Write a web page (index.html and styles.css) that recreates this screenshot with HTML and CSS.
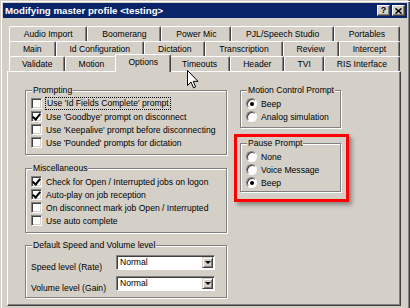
FILE: index.html
```html
<!DOCTYPE html>
<html lang="en">
<head>
    <meta charset="UTF-8">
    <title>Modifying master profile</title>
    <link rel="stylesheet" href="styles.css">
</head>
<body>
    <div class="window">
        <div class="titlebar">
            <span class="title">Modifying master profile &lt;testing&gt;</span>
            <span class="caption-btns">
                <span class="cbtn">?</span>
                <span class="cbtn">
                    <svg width="7" height="6" viewBox="0 0 7 6"><path d="M0.5 0.5 L6.5 5.5 M6.5 0.5 L0.5 5.5" stroke="#000" stroke-width="1.6"/></svg>
                </span>
            </span>
        </div>

        <!-- tab rows, back to front -->
        <div class="tabs">
            <div class="tab-row">
                <span class="tab">Audio Import</span>
                <span class="tab">Boomerang</span>
                <span class="tab">Power Mic</span>
                <span class="tab">PJL/Speech Studio</span>
                <span class="tab">Portables</span>
            </div>
            <div class="tab-row">
                <span class="tab">Main</span>
                <span class="tab">Id Configuration</span>
                <span class="tab">Dictation</span>
                <span class="tab">Transcription</span>
                <span class="tab">Review</span>
                <span class="tab">Intercept</span>
            </div>
            <div class="tab-row">
                <span class="tab">Validate</span>
                <span class="tab">Motion</span>
                <span class="tab active">Options</span>
                <span class="tab">Timeouts</span>
                <span class="tab">Header</span>
                <span class="tab">TVI</span>
                <span class="tab">RIS Interface</span>
            </div>
        </div>

        <div class="panel">
            <div class="col-left">
                <fieldset class="group">
                    <legend>Prompting</legend>
                    <div class="opt"><span class="box"></span><span class="focus">Use 'Id Fields Complete' prompt</span></div>
                    <div class="opt"><span class="box checked"></span>Use 'Goodbye' prompt on disconnect</div>
                    <div class="opt"><span class="box"></span>Use 'Keepalive' prompt before disconnecting</div>
                    <div class="opt"><span class="box"></span>Use 'Pounded' prompts for dictation</div>
                </fieldset>

                <fieldset class="group misc">
                    <legend>Miscellaneous</legend>
                    <div class="opt"><span class="box checked"></span>Check for Open / Interrupted jobs on logon</div>
                    <div class="opt"><span class="box checked"></span>Auto-play on job reception</div>
                    <div class="opt"><span class="box"></span>On disconnect mark job Open / Interrupted</div>
                    <div class="opt"><span class="box"></span>Use auto complete</div>
                </fieldset>

                <fieldset class="group speed">
                    <legend>Default Speed and Volume level</legend>
                    <div class="field">
                        <span class="field-label">Speed level (Rate)</span>
                        <div class="combo"><span class="combo-text">Normal</span><span class="combo-btn"></span></div>
                    </div>
                    <div class="field">
                        <span class="field-label">Volume level (Gain)</span>
                        <div class="combo"><span class="combo-text">Normal</span><span class="combo-btn"></span></div>
                    </div>
                </fieldset>
            </div>

            <div class="col-right">
                <fieldset class="group motion">
                    <legend>Motion Control Prompt</legend>
                    <div class="opt"><span class="radio on"></span>Beep</div>
                    <div class="opt"><span class="radio"></span>Analog simulation</div>
                </fieldset>

                <div class="highlight">
                    <fieldset class="group pause">
                        <legend>Pause Prompt</legend>
                        <div class="opt"><span class="radio"></span>None</div>
                        <div class="opt"><span class="radio"></span>Voice Message</div>
                        <div class="opt"><span class="radio on"></span>Beep</div>
                    </fieldset>
                </div>
            </div>
        </div>

        <svg class="cursor" width="12" height="19" viewBox="0 0 12 19">
            <path d="M0.5 0.5 V15.5 L4 12 L6.5 17.8 L8.6 16.9 L6.2 11.3 H11 Z" fill="#fff" stroke="#000" stroke-width="1" stroke-linejoin="miter"/>
        </svg>
    </div>
</body>
</html>
```

FILE: styles.css
```css
* {
    box-sizing: border-box;
}
body {
    margin: 0;
    background: #d4d0c8;
    color: #000;
    font-family: "Liberation Sans", Arial, sans-serif;
    font-size: 8.6px;
}
.window {
    position: relative;
    width: 410px;
    height: 308px;
    overflow: hidden;
    padding: 3px 3px 0 3px;
    background:
        linear-gradient(#fff, #fff) 1px 1px / 1px 100% no-repeat,
        linear-gradient(#fff, #fff) 1px 1px / 100% 1px no-repeat,
        linear-gradient(#808080, #808080) 408px 0 / 1px 100% no-repeat,
        linear-gradient(#404040, #404040) 409px 0 / 1px 100% no-repeat,
        #d4d0c8;
    background-origin: border-box;
}

/* title bar */
.titlebar {
    height: 15px;
    background: #0a246a;
    color: #fff;
    display: flex;
    align-items: center;
    justify-content: space-between;
    padding: 0 2px 0 2px;
}
.title {
    font-weight: bold;
    font-size: 9.7px;
}
.caption-btns {
    display: flex;
    gap: 2px;
}
.cbtn {
    width: 13px;
    height: 11px;
    background: #d4d0c8;
    color: #000;
    border: 1px solid;
    border-color: #fff #404040 #404040 #fff;
    box-shadow: inset -1px -1px 0 #808080;
    display: flex;
    align-items: center;
    justify-content: center;
    font-weight: bold;
    font-size: 9px;
    line-height: 9px;
}

/* tabs */
.tabs {
    margin: 8px 0 0 6px;
    width: 391px;
}
.tab-row {
    display: flex;
    height: 15px;
}
.tab {
    flex: 1 1 auto;
    text-align: center;
    white-space: nowrap;
    line-height: 14px;
    border-top: 1px solid #fff;
    border-left: 1px solid #fff;
    border-right: 1px solid #404040;
    box-shadow: inset -1px 0 0 #808080;
    border-radius: 2px 2px 0 0;
    background: #d4d0c8;
}
.tab.active {
    position: relative;
    z-index: 1;
    margin: -2px -2px -1px -2px;
    line-height: 15px;
    padding-bottom: 2px;
}

/* tab page */
.panel {
    margin-left: 4px;
    width: 394px;
    height: 235px;
    border: 1px solid;
    border-color: #fff #404040 #404040 #fff;
    box-shadow: inset -1px -1px 0 #808080;
    display: flex;
    align-items: flex-start;
    gap: 7px;
    padding: 12px 0 0 17px;
}
.col-left {
    width: 202px;
    display: flex;
    flex-direction: column;
}
.col-right {
    display: flex;
    flex-direction: column;
    align-items: flex-start;
}
.group {
    margin: 0;
    padding: 0 4px 5px 5px;
    border: 1px solid #808080;
    box-shadow: 1px 1px 0 #fff, inset 1px 1px 0 #fff;
}
.group legend {
    padding: 0 1px;
    margin-left: 1px;
    line-height: 13px;
    background: #d4d0c8;
}
.misc {
    margin-top: 7px;
}
.speed {
    margin-top: 6px;
    padding-bottom: 6px;
}
.motion {
    margin-left: 6px;
    width: 101px;
    padding-bottom: 4px;
}
.pause {
    width: 101px;
    padding-bottom: 2px;
}
.highlight {
    margin-top: 6px;
    width: 115px;
    border: 3px solid #f00;
    padding: 0 5px 7px 3px;
    box-shadow: 3px 3px 4px rgba(0, 0, 0, 0.35);
}

/* checkboxes and radios */
.opt {
    display: flex;
    align-items: center;
    gap: 4px;
    height: 13px;
    white-space: nowrap;
}
.box {
    flex: none;
    width: 11px;
    height: 11px;
    background: #fff;
    border: 1px solid;
    border-color: #808080 #fff #fff #808080;
    box-shadow: inset 1px 1px 0 #404040, inset -1px -1px 0 #d4d0c8;
    display: flex;
    align-items: center;
    justify-content: center;
}
.box.checked::after {
    content: "";
    width: 3px;
    height: 6px;
    border-right: 2px solid #000;
    border-bottom: 2px solid #000;
    transform: translate(0, -1px) rotate(40deg);
}
.focus {
    outline: 1px dotted #000;
    padding: 0 1px;
    line-height: 11px;
}
.radio {
    flex: none;
    width: 11px;
    height: 11px;
    border-radius: 50%;
    background: #fff;
    border: 1px solid;
    border-color: #808080 #fff #fff #808080;
    box-shadow: inset 1px 1px 0 #404040;
    display: flex;
    align-items: center;
    justify-content: center;
}
.radio.on::after {
    content: "";
    width: 4px;
    height: 4px;
    border-radius: 50%;
    background: #000;
}

/* combos */
.field {
    display: flex;
    align-items: flex-end;
    margin-top: 3px;
}
.field + .field {
    margin-top: 6px;
}
.field-label {
    flex: 0 0 85px;
    margin-bottom: -2px;
}
.combo {
    width: 99px;
    height: 15px;
    display: flex;
    background: #fff;
    border: 1px solid;
    border-color: #808080 #fff #fff #808080;
    box-shadow: inset 1px 1px 0 #404040;
}
.combo-text {
    flex: 1;
    padding: 1px 0 0 3px;
    line-height: 11px;
}
.combo-btn {
    width: 11px;
    margin: 1px;
    background: #d4d0c8;
    border: 1px solid;
    border-color: #d4d0c8 #404040 #404040 #d4d0c8;
    box-shadow: inset 1px 1px 0 #fff, inset -1px -1px 0 #808080;
    display: flex;
    align-items: center;
    justify-content: center;
}
.combo-btn::after {
    content: "";
    border-left: 3px solid transparent;
    border-right: 3px solid transparent;
    border-top: 3px solid #000;
}

/* mouse pointer over the tab strip */
.cursor {
    position: absolute;
    left: 187px;
    top: 70px;
}
```
